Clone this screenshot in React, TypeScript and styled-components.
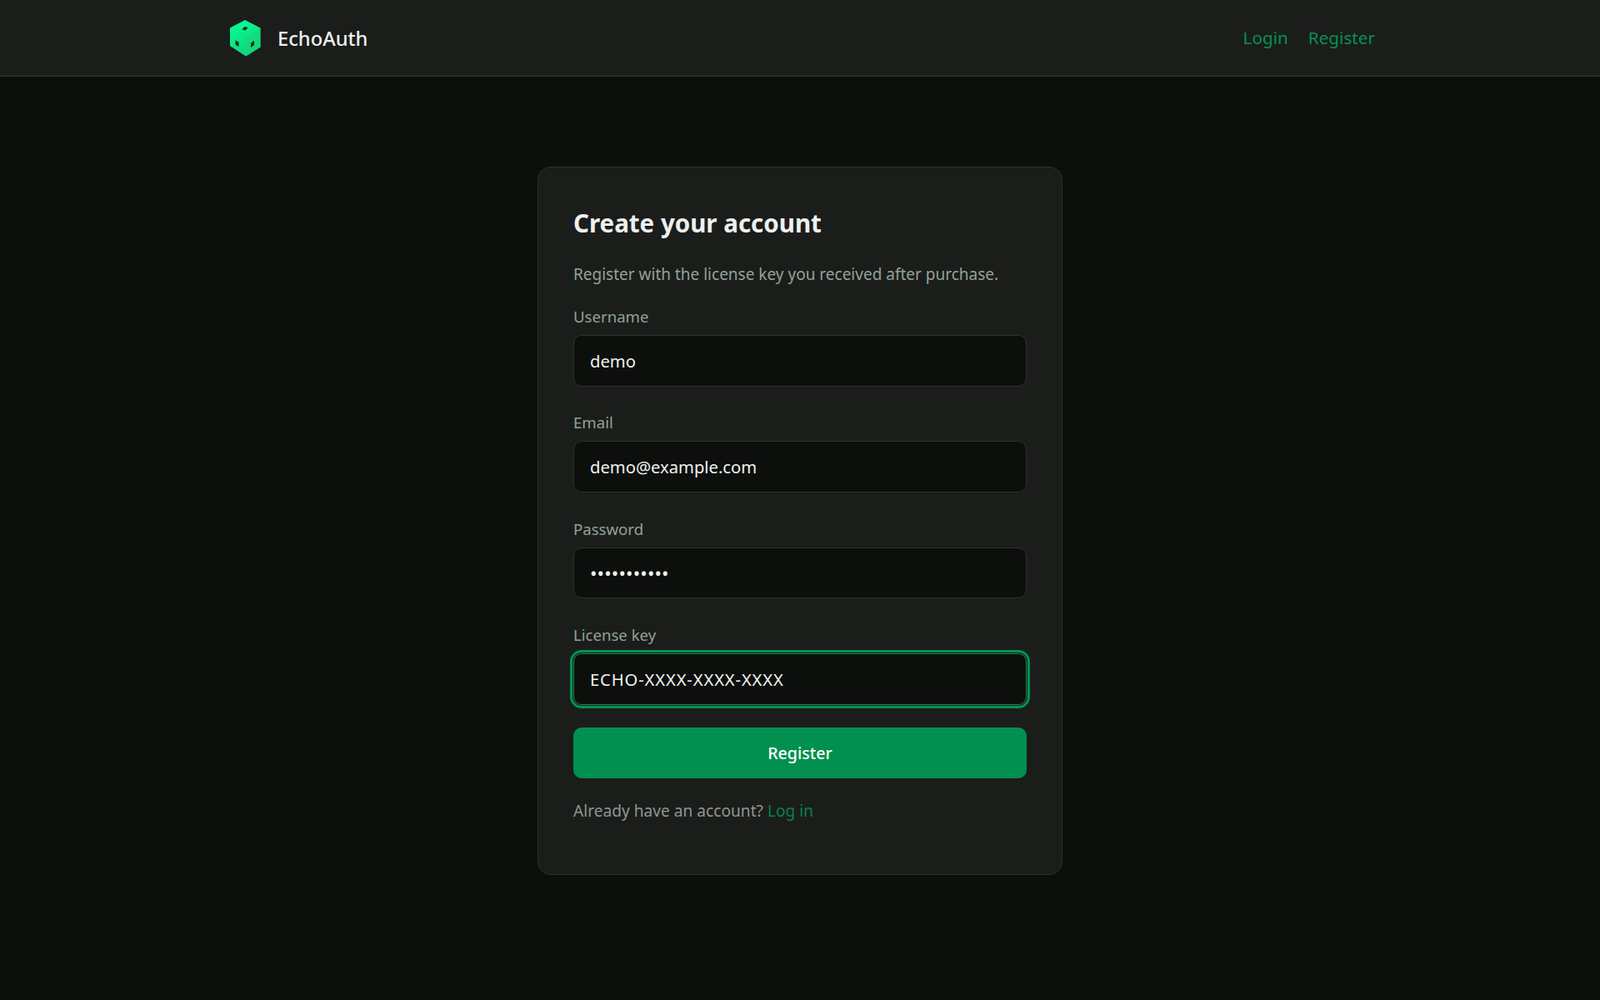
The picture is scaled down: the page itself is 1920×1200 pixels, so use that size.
import React from "react";
import styled, { createGlobalStyle } from "styled-components";

const Global = createGlobalStyle`
  html, body { margin: 0; padding: 0; background: #0d0f0d; }
  * { box-sizing: border-box; }
  body { font-family: "Noto Sans", "Open Sans", sans-serif; }
`;
const Page = styled.div`min-height: 1200px; background: #0d0f0d; display: flex; flex-direction: column;`;
const Header = styled.header`
  height: 92px; background: #1b1d1b; border-bottom: 2px solid #2a2d2a; padding: 0 270px 0 274px;
  display: flex; align-items: center; justify-content: space-between;
`;
const Brand = styled.div`display: flex; align-items: center; gap: 19px; padding-top: 2px; font-size: 23.7px; font-weight: 500; color: #eef0ee;`;
const Nav = styled.nav`display: flex; gap: 24px;`;
const NavLink = styled.a`font-size: 20.7px; color: #059150;`;
const Main = styled.main`display: flex; justify-content: center; padding-top: 108px;`;
const Card = styled.section`
  width: 630px; height: 850px; background: #1b1d1b; border: 1px solid #2d302d; border-radius: 16px; padding: 47px 42px 0;
`;
const Title = styled.h1`margin: 0 0 26px; font-size: 29.5px; line-height: 40px; font-weight: 700; color: #eef0ee;`;
const Sub = styled.p`margin: 0 0 22px; font-size: 19px; line-height: 30px; color: #93a296;`;
const Field = styled.div`
  margin-bottom: 29.9px;
  &:last-of-type { margin-bottom: 27px; }
`;
const Label = styled.label`display: block; font-size: 18.6px; line-height: 28px; margin-bottom: 8px; color: #93a296;`;
const Input = styled.input<{ $focus?: boolean; $size?: number; $track?: number }>`
  display: block; width: 100%; height: 61.5px; border-radius: 10px; background: #0d0f0d; color: #f0f2f0;
  border: 1px solid ${(p) => (p.$focus ? "#059150" : "#2f322f")}; padding: 0 19px;
  font: ${(p) => p.$size ?? 20.2}px "Noto Sans", sans-serif; letter-spacing: ${(p) => p.$track ?? 0}px; outline: none;
  ${(p) => (p.$focus ? "box-shadow: 0 0 0 1px #1b1d1b, 0 0 0 4px #059150;" : "")}
`;
const Button = styled.button`
  display: block; width: 100%; height: 61.5px; border: 0; border-radius: 10px; background: #019050; color: #fff;
  font: 500 19.6px "Noto Sans", sans-serif;
`;
const Foot = styled.p`margin: 24px 0 0; font-size: 19.15px; line-height: 30px; color: #8f9690;`;
const Link = styled.a`color: #05824a;`;

const Logo = () => (
  <svg width="40" height="46" viewBox="0 0 40 46">
    <defs>
      <linearGradient id="cube" x1="0.2" y1="0" x2="0.7" y2="1">
        <stop offset="0" stopColor="#05ff95" />
        <stop offset="1" stopColor="#12cf78" />
      </linearGradient>
    </defs>
    <path d="M20 1 38.5 10.5V33.5L21 44.5 2 32V10.5Z" fill="url(#cube)" />
    <path d="M20 23 38.5 10.5V33.5L21 44.5Z" fill="#12d97e" opacity="0.7" />
    <path d="M16.5 12.5l3-3.5 4 1-3 3.500z" fill="#0c2a1c" />
    <path d="M8.500 25.500l4 2v5.500l-4-2.500z" fill="#0c2a1c" />
    <path d="M27 29l4-3.500v5.500l-4 3z" fill="#0c2a1c" />
  </svg>
);

export default function App() {
  return (
    <Page>
      <Global />
      <Header>
        <Brand><Logo />EchoAuth</Brand>
        <Nav><NavLink>Login</NavLink><NavLink>Register</NavLink></Nav>
      </Header>
      <Main>
        <Card>
          <Title>Create your account</Title>
          <Sub>Register with the license key you received after purchase.</Sub>
          <Field><Label>Username</Label><Input defaultValue="demo" /></Field>
          <Field><Label>Email</Label><Input defaultValue="demo@example.com" /></Field>
          <Field><Label>Password</Label><Input type="password" defaultValue="password123" $size={22.500} $track={0.15} /></Field>
          <Field><Label>License key</Label><Input $focus defaultValue="ECHO-XXXX-XXXX-XXXX" $track={0.87} /></Field>
          <Button>Register</Button>
          <Foot>Already have an account? <Link>Log in</Link></Foot>
        </Card>
      </Main>
    </Page>
  );
}
